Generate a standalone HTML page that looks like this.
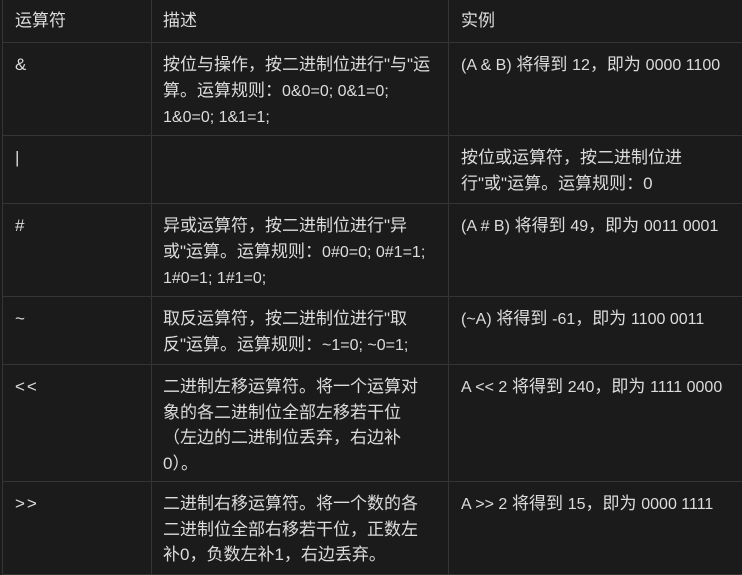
<!DOCTYPE html>
<html><head><meta charset="utf-8"><style>
html,body{margin:0;padding:0;background:#1b1b1b;width:742px;height:575px;overflow:hidden}
body{font-family:"Liberation Sans","Noto Sans CJK SC",sans-serif;font-size:17px;color:#dcdcdc}
.r{position:absolute;left:2px;width:760px;border-top:1px solid #353535}
.v{position:absolute;top:0;height:575px;border-left:1px solid #353535}
.c{position:absolute;line-height:25.5px;white-space:nowrap}
.l{font-size:16px}
</style></head><body>
<div class="v" style="left:2px"></div>
<div class="v" style="left:151px"></div>
<div class="v" style="left:448px"></div>
<div class="r" style="top:42px"></div>
<div class="r" style="top:135px"></div>
<div class="r" style="top:203px"></div>
<div class="r" style="top:296px"></div>
<div class="r" style="top:364px"></div>
<div class="r" style="top:481px"></div>
<div class="r" style="top:574px"></div>

<div class="c" style="left:15px;top:8px">运算符</div>
<div class="c" style="left:163px;top:8px">描述</div>
<div class="c" style="left:461px;top:8px">实例</div>

<div class="c" style="left:15px;top:52px">&amp;</div>
<div class="c" style="left:163px;top:52px">按位与操作，按二进制位进行"与"运<br>算。运算规则：<span class="l">0&amp;0=0; 0&amp;1=0;</span><br><span class="l">1&amp;0=0; 1&amp;1=1;</span></div>
<div class="c" style="left:461px;top:52px"><span class="l">(A &amp; B)</span> 将得到 <span class="l">12</span>，即为 <span class="l">0000 1100</span></div>

<div class="c" style="left:15px;top:145px">|</div>
<div class="c" style="left:461px;top:145px">按位或运算符，按二进制位进<br>行"或"运算。运算规则：0</div>

<div class="c" style="left:15px;top:213px">#</div>
<div class="c" style="left:163px;top:213px">异或运算符，按二进制位进行"异<br>或"运算。运算规则：<span class="l">0#0=0; 0#1=1;</span><br><span class="l">1#0=1; 1#1=0;</span></div>
<div class="c" style="left:461px;top:213px"><span class="l">(A # B)</span> 将得到 <span class="l">49</span>，即为 <span class="l">0011 0001</span></div>

<div class="c" style="left:15px;top:306px">~</div>
<div class="c" style="left:163px;top:306px">取反运算符，按二进制位进行"取<br>反"运算。运算规则：<span class="l">~1=0; ~0=1;</span></div>
<div class="c" style="left:461px;top:306px"><span class="l">(~A)</span> 将得到 <span class="l">-61</span>，即为 <span class="l">1100 0011</span></div>

<div class="c" style="left:15px;top:374px;letter-spacing:2px">&lt;&lt;</div>
<div class="c" style="left:163px;top:374px">二进制左移运算符。将一个运算对<br>象的各二进制位全部左移若干位<br>（左边的二进制位丢弃，右边补<br>0）。</div>
<div class="c" style="left:461px;top:374px"><span class="l">A &lt;&lt; 2</span> 将得到 <span class="l">240</span>，即为 <span class="l">1111 0000</span></div>

<div class="c" style="left:15px;top:491px;letter-spacing:2px">&gt;&gt;</div>
<div class="c" style="left:163px;top:491px">二进制右移运算符。将一个数的各<br>二进制位全部右移若干位，正数左<br>补0，负数左补1，右边丢弃。</div>
<div class="c" style="left:461px;top:491px"><span class="l">A &gt;&gt; 2</span> 将得到 <span class="l">15</span>，即为 <span class="l">0000 1111</span></div>
</body></html>
